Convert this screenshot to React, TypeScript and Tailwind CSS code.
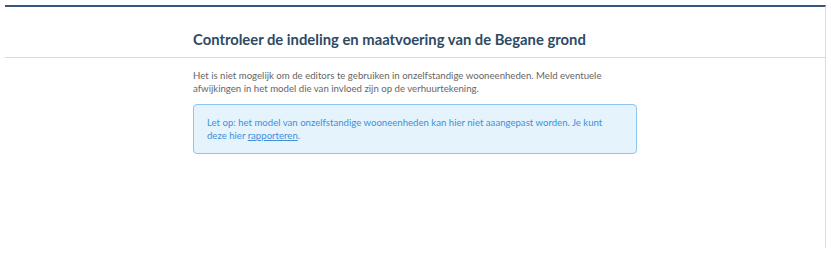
export default function App() {
  return (
    <div className="bg-white w-[831px] h-[265px] pt-[5px] pl-[5px]" style={{ fontFamily: 'Lato, "Open Sans", sans-serif' }}>
      <div className="w-[821px] h-[243px] border-t-2 border-t-[#34587a] border-r border-r-[#dedede] bg-white">
        <div className="h-[51px] border-b border-b-[#d9d9d9] pt-[23px]">
          <div className="w-[444px] mx-auto">
            <h1 className="text-[14.8px] font-bold text-[#2e4a64] leading-[18px] whitespace-nowrap">
              Controleer de indeling en maatvoering van de Begane grond
            </h1>
          </div>
        </div>
        <div className="w-[444px] mx-auto pt-[11px]">
          <p className="text-[9.65px] leading-[13px] text-[#666666] whitespace-nowrap">
            Het is niet mogelijk om de editors te gebruiken in onzelfstandige wooneenheden. Meld eventuele<br />
            afwijkingen in het model die van invloed zijn op de verhuurtekening.
          </p>
          <div className="mt-[9px] h-[50px] rounded-[4px] border border-[#8ec5f0] bg-[#e5f3fd] pl-[13px] pr-[10px] py-[11px]">
            <p className="text-[9.6px] leading-[13px] text-[#3d91da] whitespace-nowrap">
              Let op: het model van onzelfstandige wooneenheden kan hier niet aaangepast worden. Je kunt<br />
              deze hier <a href="#" className="underline">rapporteren</a>.
            </p>
          </div>
        </div>
      </div>
    </div>
  );
}
